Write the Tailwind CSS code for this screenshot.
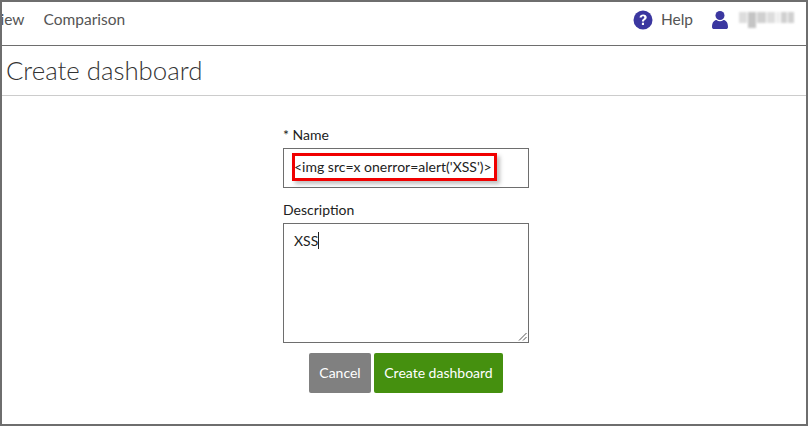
<!DOCTYPE html>
<html class="h-full">
    <head>
        <title>Create dashboard</title>
        <meta name="viewport" content="width=device-width, initial-scale=1" />
        <script src="https://cdn.jsdelivr.net/npm/@tailwindcss/browser@4"></script>
    </head>
    <body class="h-full overflow-hidden bg-white">
        <div class="h-[426px] w-[808px] overflow-hidden border-2 border-[#6e6e6e] font-['Lato',sans-serif] text-[#333]">
            <header class="flex h-[44px] items-center justify-between border-b border-[#6e6e6e] text-[15.5px] text-[#555]">
                <nav class="flex gap-[19px] pb-[8px]">
                    <span class="ml-[-12px]">View</span>
                    <span>Comparison</span>
                </nav>
                <div class="flex items-center pb-[8px]">
                    <svg class="h-[20px] w-[20px]" viewBox="0 0 20 20">
                        <circle cx="10" cy="10" r="9.5" fill="#3b37a0" />
                        <path d="M6.5 7.6c.2-2.100 1.700-3.200 3.700-3.200 2.100 0 3.500 1.200 3.500 2.900 0 2.500-2.700 2.500-2.700 4.300H8.900c0-2.900 2.400-2.900 2.400-4.200 0-.7-.5-1.100-1.200-1.100-.8 0-1.300.5-1.400 1.300z" fill="#fff" />
                        <rect x="8.900" y="12.700" width="2.100" height="2.300" fill="#fff" />
                    </svg>
                    <span class="ml-[8px]">Help</span>
                    <svg class="ml-[18px] h-[20px] w-[18px]" viewBox="0 0 18 20">
                        <circle cx="9" cy="5.500" r="4.500" fill="#3b37a0" />
                        <path d="M1 17c0-5 2.500-7 4.500-7 1 .8 2.200 1.200 3.500 1.200s2.500-.4 3.500-1.200c2 0 4.500 2 4.500 7 0 1.500-1 2-2 2H3c-1 0-2-.5-2-2z" fill="#3b37a0" />
                    </svg>
                    <div class="ml-[10px] mr-[7px] flex h-[16px] w-[60px] items-start gap-px blur-[1px]">
                        <div class="h-[11px] w-[8px] bg-[#ddd]"></div>
                        <div class="h-[16px] w-[8px] bg-[#c4c4c4]"></div>
                        <div class="h-[11px] w-[9px] bg-[#d0d0d0]"></div>
                        <div class="h-[11px] w-[8px] bg-[#ddd]"></div>
                        <div class="h-[11px] w-[4px] bg-[#eee]"></div>
                        <div class="h-[11px] w-[6px] bg-[#d0d0d0]"></div>
                        <div class="h-[11px] w-[6px] bg-[#d0d0d0]"></div>
                    </div>
                </div>
            </header>

            <div class="flex h-[50px] items-center border-b border-[#ccc] pb-px pl-[4px]">
                <h1 class="text-[25.8px] font-light text-[#333]">Create dashboard</h1>
            </div>

            <form class="mx-auto mt-[30px] flex w-[246px] translate-x-[2px] flex-col">
                <label class="text-sm leading-[18px] text-[#222]">* Name</label>
                <div class="mt-[4px] flex h-[40px] items-start border border-[#6e6e6e] pt-[4px] pl-[8px]">
                    <div class="flex h-[28px] w-[205px] items-center border-[3px] border-[#f00000] bg-white text-sm whitespace-nowrap text-[#222] shadow-[3px_3px_4px_rgba(0,0,0,0.25)]"><span class="ml-[-1px]">&lt;img src=x onerror=alert('XSS')&gt;</span></div>
                </div>
                <label class="mt-[13px] text-sm leading-[18px] text-[#222]">Description</label>
                <div class="relative mt-[4px] h-[120px] border border-[#6e6e6e] pt-[7px] pl-[10px] text-sm text-[#222]">
                    <span class="border-r border-[#222]">XSS</span>
                    <svg class="absolute right-[1px] bottom-[1px] h-[9px] w-[9px]" viewBox="0 0 9 9">
                        <path d="M1 8.500 8.500 1M5 8.500 8.500 5" stroke="#555" fill="none" />
                    </svg>
                </div>
                <div class="mt-[10px] flex justify-center gap-[3px] text-sm text-white">
                    <button type="button" class="h-[40px] w-[62px] rounded-[2px] bg-[#808080]">Cancel</button>
                    <button type="button" class="h-[40px] w-[129px] rounded-[2px] bg-[#45900f]">Create dashboard</button>
                </div>
            </form>
        </div>
    </body>
</html>
